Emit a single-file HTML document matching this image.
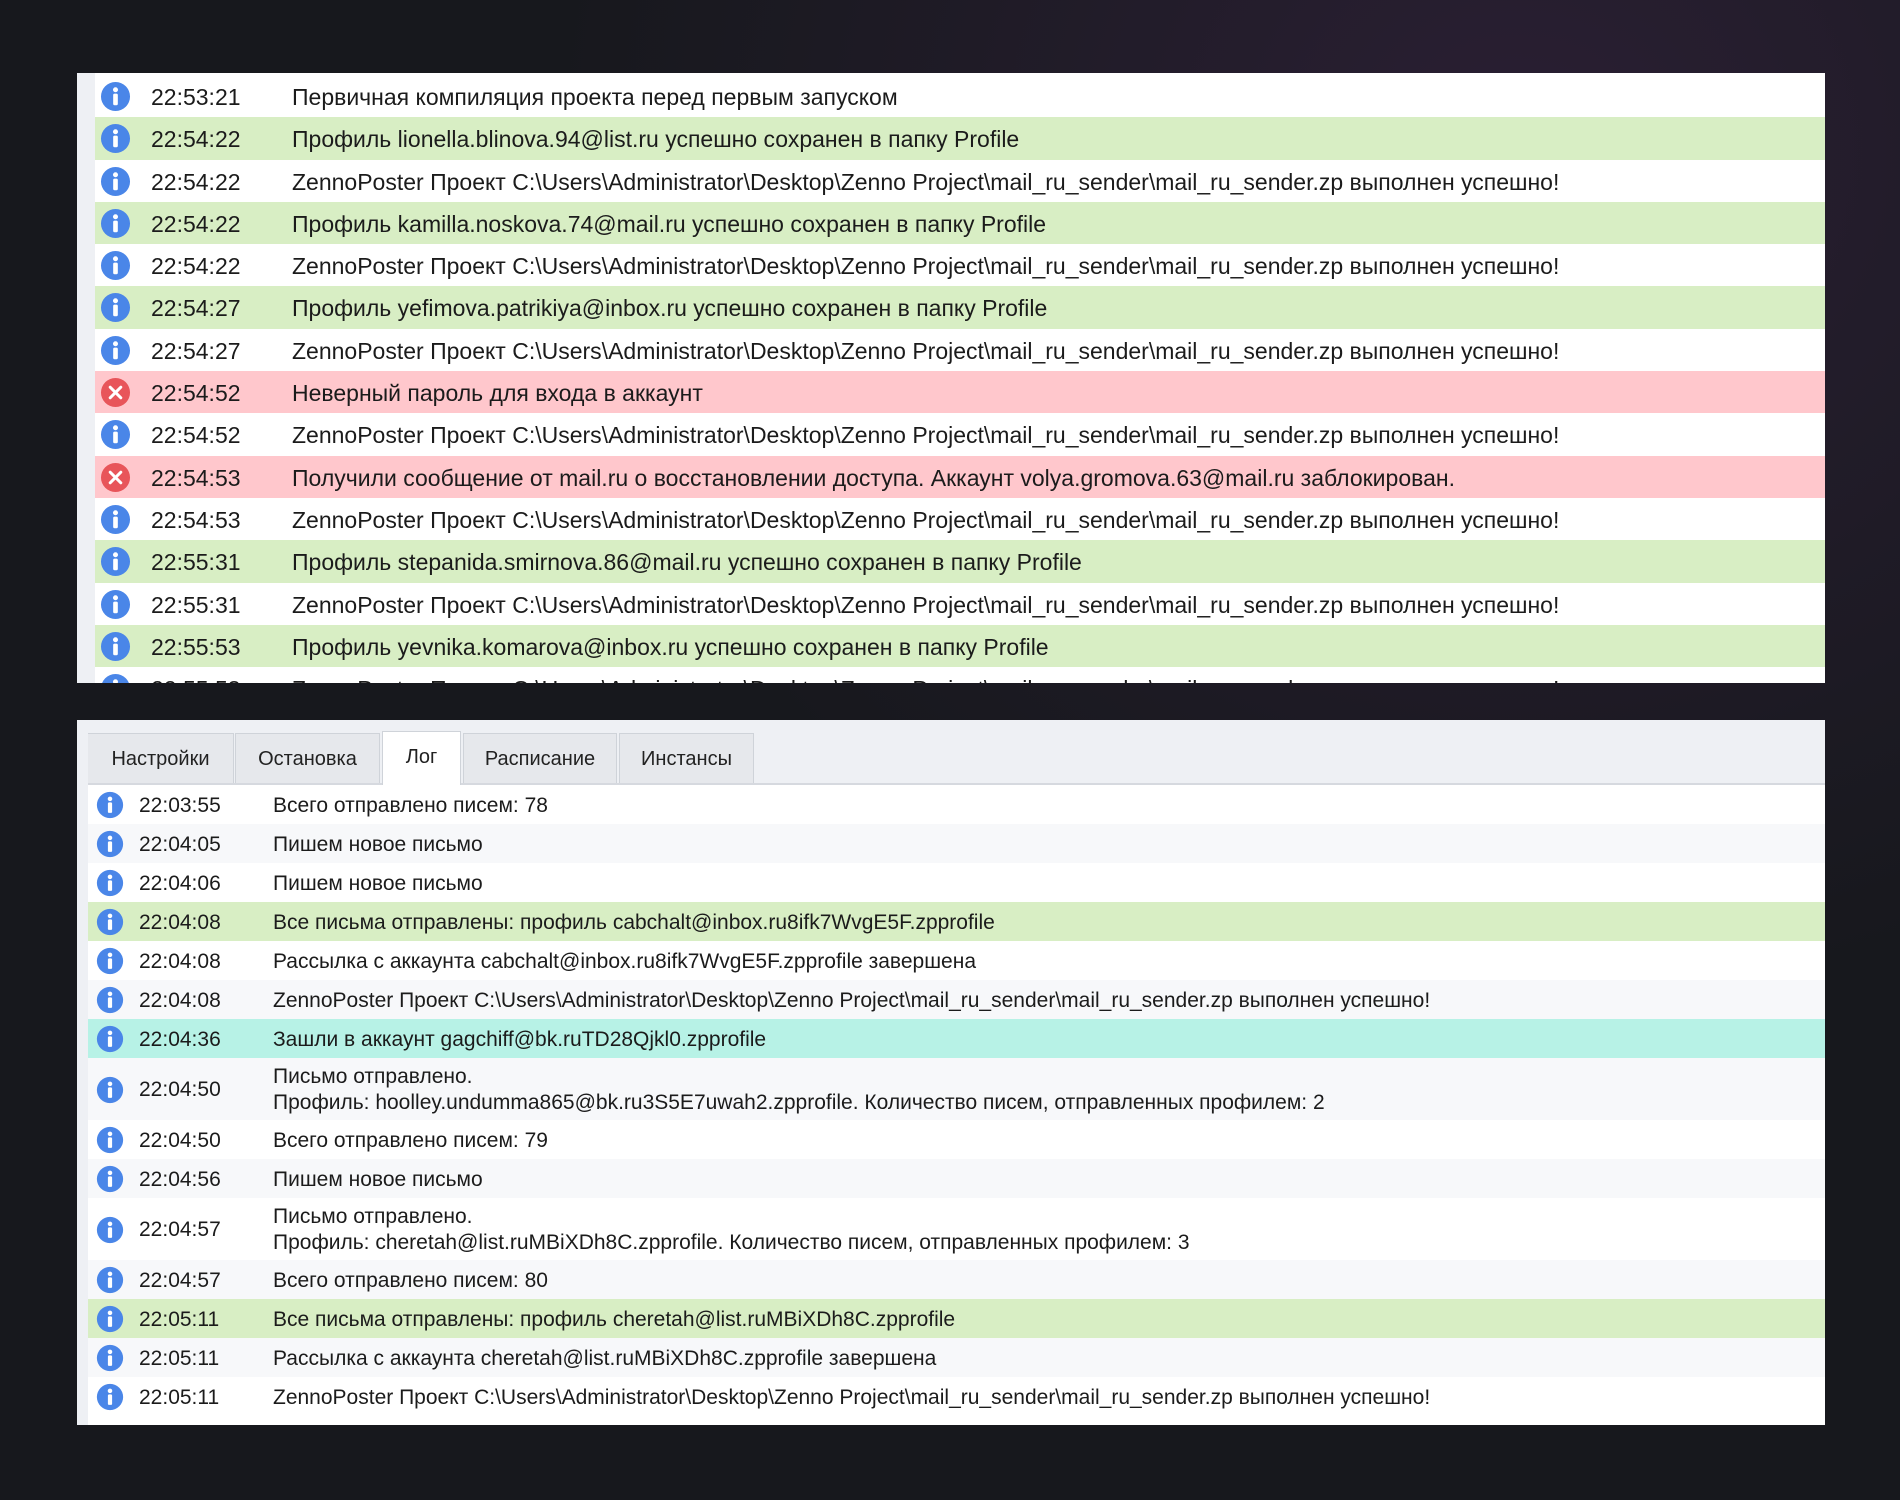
<!DOCTYPE html>
<html><head><meta charset="utf-8"><style>
body{margin:0;width:1900px;height:1500px;background:radial-gradient(ellipse at 80% 10%,#2a1f33 0%,#17181d 45%),#17181d;overflow:hidden;font-family:"Liberation Sans","DejaVu Sans",sans-serif;color:#1b1b1b;position:relative}
.p{position:absolute;left:77px;width:1748px;background:#fff;overflow:hidden;box-sizing:border-box}
#top{top:73px;height:610px;padding-top:2px;border-left:18px solid #eef0f4}
#bot{top:720px;height:705px;border-left:11px solid #eef0f4;background:#fff}
.r{position:relative;height:42.3px;font-size:23px;line-height:44px;white-space:nowrap}
.r .ic{position:absolute;left:5px;top:6px;width:31px;height:31px}
.r .t{position:absolute;left:56px}
.r .m{position:absolute;left:197px}
.g{background:#d8eec4}.e{background:#ffc7cc}.c{background:#b7f2e6}.a{background:#f7f8fa}
#tabs{height:63px;background:#eef0f4;border-bottom:2px solid #d6d9df;position:relative}
.tab{position:absolute;top:13px;height:50px;line-height:50px;font-size:20px;text-align:center;background:#e6e8ec;border:1px solid #cfd3d9;border-bottom:none;box-sizing:border-box;color:#222}
.tab.on{background:#fff;top:11px;height:54px}
.b{position:relative;height:39px;font-size:21px;line-height:42px;white-space:nowrap}
.b.two{height:62px;line-height:26px}
.b .ic{position:absolute;left:8px;top:6px;width:28px;height:28px}
.b.two .ic{top:18px}
.b .t{position:absolute;left:51px}
.b.two .t{top:19px}
.b .m{position:absolute;left:185px}
.b.two .m{top:6px}
</style></head><body>
<svg width="0" height="0" style="position:absolute"><defs>
<symbol id="i" viewBox="0 0 32 32"><circle cx="16" cy="16" r="15" fill="#4a86e8"/><circle cx="16" cy="9" r="2.6" fill="#fff"/><rect x="13.6" y="13" width="4.8" height="12" rx="1.5" fill="#fff"/></symbol>
<symbol id="x" viewBox="0 0 32 32"><circle cx="16" cy="16" r="15" fill="#e8555a"/><path d="M10.5 10.5L21.5 21.5M21.5 10.5L10.5 21.5" stroke="#fff" stroke-width="3" stroke-linecap="round"/></symbol>
</defs></svg>

<div class="p" id="top">
<div class="r"><svg class="ic"><use href="#i"/></svg><span class="t">22:53:21</span><span class="m">Первичная компиляция проекта перед первым запуском</span></div>
<div class="r g"><svg class="ic"><use href="#i"/></svg><span class="t">22:54:22</span><span class="m">Профиль lionella.blinova.94@list.ru успешно сохранен в папку Profile</span></div>
<div class="r"><svg class="ic"><use href="#i"/></svg><span class="t">22:54:22</span><span class="m">ZennoPoster Проект C:\Users\Administrator\Desktop\Zenno Project\mail_ru_sender\mail_ru_sender.zp выполнен успешно!</span></div>
<div class="r g"><svg class="ic"><use href="#i"/></svg><span class="t">22:54:22</span><span class="m">Профиль kamilla.noskova.74@mail.ru успешно сохранен в папку Profile</span></div>
<div class="r"><svg class="ic"><use href="#i"/></svg><span class="t">22:54:22</span><span class="m">ZennoPoster Проект C:\Users\Administrator\Desktop\Zenno Project\mail_ru_sender\mail_ru_sender.zp выполнен успешно!</span></div>
<div class="r g"><svg class="ic"><use href="#i"/></svg><span class="t">22:54:27</span><span class="m">Профиль yefimova.patrikiya@inbox.ru успешно сохранен в папку Profile</span></div>
<div class="r"><svg class="ic"><use href="#i"/></svg><span class="t">22:54:27</span><span class="m">ZennoPoster Проект C:\Users\Administrator\Desktop\Zenno Project\mail_ru_sender\mail_ru_sender.zp выполнен успешно!</span></div>
<div class="r e"><svg class="ic"><use href="#x"/></svg><span class="t">22:54:52</span><span class="m">Неверный пароль для входа в аккаунт</span></div>
<div class="r"><svg class="ic"><use href="#i"/></svg><span class="t">22:54:52</span><span class="m">ZennoPoster Проект C:\Users\Administrator\Desktop\Zenno Project\mail_ru_sender\mail_ru_sender.zp выполнен успешно!</span></div>
<div class="r e"><svg class="ic"><use href="#x"/></svg><span class="t">22:54:53</span><span class="m">Получили сообщение от mail.ru о восстановлении доступа. Аккаунт volya.gromova.63@mail.ru заблокирован.</span></div>
<div class="r"><svg class="ic"><use href="#i"/></svg><span class="t">22:54:53</span><span class="m">ZennoPoster Проект C:\Users\Administrator\Desktop\Zenno Project\mail_ru_sender\mail_ru_sender.zp выполнен успешно!</span></div>
<div class="r g"><svg class="ic"><use href="#i"/></svg><span class="t">22:55:31</span><span class="m">Профиль stepanida.smirnova.86@mail.ru успешно сохранен в папку Profile</span></div>
<div class="r"><svg class="ic"><use href="#i"/></svg><span class="t">22:55:31</span><span class="m">ZennoPoster Проект C:\Users\Administrator\Desktop\Zenno Project\mail_ru_sender\mail_ru_sender.zp выполнен успешно!</span></div>
<div class="r g"><svg class="ic"><use href="#i"/></svg><span class="t">22:55:53</span><span class="m">Профиль yevnika.komarova@inbox.ru успешно сохранен в папку Profile</span></div>
<div class="r"><svg class="ic"><use href="#i"/></svg><span class="t">22:55:53</span><span class="m">ZennoPoster Проект C:\Users\Administrator\Desktop\Zenno Project\mail_ru_sender\mail_ru_sender.zp выполнен успешно!</span></div>
</div>

<div class="p" id="bot">
<div id="tabs">
<div class="tab" style="left:-1px;width:147px">Настройки</div>
<div class="tab" style="left:147px;width:145px">Остановка</div>
<div class="tab on" style="left:294px;width:79px">Лог</div>
<div class="tab" style="left:375px;width:154px">Расписание</div>
<div class="tab" style="left:531px;width:135px">Инстансы</div>
</div>
<div class="b"><svg class="ic"><use href="#i"/></svg><span class="t">22:03:55</span><span class="m">Всего отправлено писем: 78</span></div>
<div class="b a"><svg class="ic"><use href="#i"/></svg><span class="t">22:04:05</span><span class="m">Пишем новое письмо</span></div>
<div class="b"><svg class="ic"><use href="#i"/></svg><span class="t">22:04:06</span><span class="m">Пишем новое письмо</span></div>
<div class="b g"><svg class="ic"><use href="#i"/></svg><span class="t">22:04:08</span><span class="m">Все письма отправлены: профиль cabchalt@inbox.ru8ifk7WvgE5F.zpprofile</span></div>
<div class="b"><svg class="ic"><use href="#i"/></svg><span class="t">22:04:08</span><span class="m">Рассылка с аккаунта cabchalt@inbox.ru8ifk7WvgE5F.zpprofile завершена</span></div>
<div class="b a"><svg class="ic"><use href="#i"/></svg><span class="t">22:04:08</span><span class="m">ZennoPoster Проект C:\Users\Administrator\Desktop\Zenno Project\mail_ru_sender\mail_ru_sender.zp выполнен успешно!</span></div>
<div class="b c"><svg class="ic"><use href="#i"/></svg><span class="t">22:04:36</span><span class="m">Зашли в аккаунт gagchiff@bk.ruTD28Qjkl0.zpprofile</span></div>
<div class="b two a"><svg class="ic"><use href="#i"/></svg><span class="t">22:04:50</span><span class="m">Письмо отправлено.<br>Профиль: hoolley.undumma865@bk.ru3S5E7uwah2.zpprofile. Количество писем, отправленных профилем: 2</span></div>
<div class="b"><svg class="ic"><use href="#i"/></svg><span class="t">22:04:50</span><span class="m">Всего отправлено писем: 79</span></div>
<div class="b a"><svg class="ic"><use href="#i"/></svg><span class="t">22:04:56</span><span class="m">Пишем новое письмо</span></div>
<div class="b two"><svg class="ic"><use href="#i"/></svg><span class="t">22:04:57</span><span class="m">Письмо отправлено.<br>Профиль: cheretah@list.ruMBiXDh8C.zpprofile. Количество писем, отправленных профилем: 3</span></div>
<div class="b a"><svg class="ic"><use href="#i"/></svg><span class="t">22:04:57</span><span class="m">Всего отправлено писем: 80</span></div>
<div class="b g"><svg class="ic"><use href="#i"/></svg><span class="t">22:05:11</span><span class="m">Все письма отправлены: профиль cheretah@list.ruMBiXDh8C.zpprofile</span></div>
<div class="b a"><svg class="ic"><use href="#i"/></svg><span class="t">22:05:11</span><span class="m">Рассылка с аккаунта cheretah@list.ruMBiXDh8C.zpprofile завершена</span></div>
<div class="b"><svg class="ic"><use href="#i"/></svg><span class="t">22:05:11</span><span class="m">ZennoPoster Проект C:\Users\Administrator\Desktop\Zenno Project\mail_ru_sender\mail_ru_sender.zp выполнен успешно!</span></div>
</div>
</body></html>
